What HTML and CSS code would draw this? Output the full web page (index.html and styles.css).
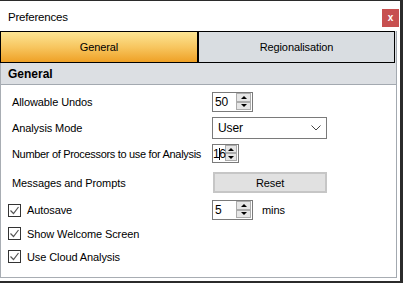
FILE: index.html
```html
<!DOCTYPE html>
<html>
<head>
<meta charset="utf-8">
<link rel="stylesheet" href="styles.css">
</head>
<body>
<div class="window">
  <div class="titlebar">
    <span class="title">Preferences</span>
    <span class="close">x</span>
  </div>
  <div class="tabbox">
    <div class="tabs">
      <div class="tab active">General</div>
      <div class="tab">Regionalisation</div>
    </div>
    <div class="panel">
      <div class="header">General</div>
      <div class="rows">
        <div class="label">Allowable Undos</div>
        <div class="ctl">
          <div class="spin w41"><span class="val">50</span><span class="btns"><span class="b up"></span><span class="b down"></span></span></div>
        </div>

        <div class="label">Analysis Mode</div>
        <div class="ctl">
          <div class="select"><span>User</span><svg width="10" height="6" viewBox="0 0 10 6"><polyline points="0.5,0.5 5,5 9.5,0.5" fill="none" stroke="#444" stroke-width="1"/></svg></div>
        </div>

        <div class="label tight">Number of Processors to use for Analysis</div>
        <div class="ctl">
          <div class="spin w27"><span class="val narrow">16<i class="caret"></i></span><span class="btns"><span class="b up"></span><span class="b down"></span></span></div>
        </div>

        <div class="label">Messages and Prompts</div>
        <div class="ctl">
          <div class="button">Reset</div>
        </div>

        <div class="check"><span class="box"><svg width="11" height="11" viewBox="0 0 11 11"><polyline points="1.5,5.5 4.5,8.5 9.5,2" fill="none" stroke="#555" stroke-width="1.2"/></svg></span>Autosave</div>
        <div class="ctl">
          <div class="spin w41"><span class="val">5</span><span class="btns"><span class="b up"></span><span class="b down"></span></span></div>
          <span class="unit">mins</span>
        </div>

        <div class="check full"><span class="box"><svg width="11" height="11" viewBox="0 0 11 11"><polyline points="1.5,5.5 4.5,8.5 9.5,2" fill="none" stroke="#555" stroke-width="1.2"/></svg></span>Show Welcome Screen</div>

        <div class="check full"><span class="box"><svg width="11" height="11" viewBox="0 0 11 11"><polyline points="1.5,5.5 4.5,8.5 9.5,2" fill="none" stroke="#555" stroke-width="1.2"/></svg></span>Use Cloud Analysis</div>
      </div>
    </div>
  </div>
</div>
</body>
</html>
```

FILE: styles.css
```css
html, body {
  margin: 0;
  padding: 0;
  background: #ffffff;
}
body {
  font-family: "Liberation Sans", Arial, sans-serif;
  font-size: 11px;
  letter-spacing: -0.1px;
  color: #000;
}
.window {
  width: 400px;
  height: 280px;
  border-top: 1px solid #2b2b2b;
  border-right: 3px solid #2b2b2b;
  border-bottom: 2px solid #2b2b2b;
  background: #fff;
  display: flex;
  flex-direction: column;
}
.titlebar {
  height: 30px;
  display: flex;
  align-items: center;
  justify-content: space-between;
  padding-left: 8px;
  padding-right: 1px;
}
.title {
  font-size: 11.5px;
  letter-spacing: -0.2px;
  margin-top: 2px;
}
.close {
  width: 17px;
  height: 18px;
  margin-top: 4px;
  background: #c75050;
  color: #fff;
  font-weight: bold;
  font-size: 10px;
  display: flex;
  align-items: center;
  justify-content: center;
  line-height: 1;
}
.tabbox {
  width: 396px;
  border-right: 1px solid #a3a9b0;
  background: #dcdfe3;
  display: flex;
  flex-direction: column;
}
.tabs {
  display: flex;
  height: 32px;
}
.tab {
  box-sizing: border-box;
  height: 32px;
  border: 1px solid #000;
  display: flex;
  align-items: center;
  justify-content: center;
  font-size: 11px;
  background: #d9dde1;
}
.tab:first-child {
  width: 198px;
}
.tab:last-child {
  width: 197px;
}
.tab.active {
  background: linear-gradient(to bottom, #fde594 0%, #f7c660 50%, #efa126 100%);
}
.panel {
  height: 214px;
  border-left: 1px solid #a8adb3;
  border-bottom: 1px solid #a8adb3;
  background: #fff;
}
.header {
  height: 21px;
  background: #dcdfe3;
  border-bottom: 1px solid #a3a9b0;
  font-weight: bold;
  font-size: 12px;
  letter-spacing: 0;
  display: flex;
  align-items: center;
  padding-left: 7px;
}
.rows {
  display: grid;
  grid-template-columns: 204px auto;
  grid-template-rows: 26px 26px 25px 33px 22px 25px 21px;
  padding-top: 4px;
  padding-left: 7px;
}
.label {
  display: flex;
  align-items: center;
  padding-left: 4px;
  white-space: nowrap;
}
.label.tight {
  letter-spacing: -0.32px;
}
.ctl {
  display: flex;
  align-items: center;
}
.check {
  display: flex;
  align-items: center;
  white-space: nowrap;
}
.check.full {
  grid-column: 1 / span 2;
}
.box {
  box-sizing: border-box;
  width: 13px;
  height: 13px;
  border: 1px solid #333;
  background: #fff;
  margin-right: 6px;
  display: flex;
  align-items: center;
  justify-content: center;
}
.spin {
  box-sizing: border-box;
  height: 20px;
  border: 1px solid #7a7a7a;
  background: #fff;
  display: flex;
  align-items: stretch;
}
.spin.w41 {
  width: 41px;
}
.spin.w27 {
  width: 27px;
  height: 19px;
}
.val {
  flex: 1;
  display: flex;
  align-items: center;
  padding-left: 2px;
  font-size: 12px;
  position: relative;
}
.val.narrow {
  padding-left: 0;
  letter-spacing: -0.5px;
}
.caret {
  position: absolute;
  left: 6px;
  top: 3px;
  width: 1px;
  height: 12px;
  background: #000;
}
.btns {
  width: 15px;
  display: flex;
  flex-direction: column;
  margin: 0 1px 1px 0;
}
.b {
  box-sizing: border-box;
  flex: 1;
  border: 1px solid #acacac;
  background: #e6e6e6;
  display: flex;
  align-items: center;
  justify-content: center;
}
.b.up::after {
  content: "";
  border-left: 3px solid transparent;
  border-right: 3px solid transparent;
  border-bottom: 3px solid #000;
}
.b.down::after {
  content: "";
  border-left: 3px solid transparent;
  border-right: 3px solid transparent;
  border-top: 3px solid #000;
}
.select {
  box-sizing: border-box;
  width: 115px;
  height: 22px;
  border: 1px solid #7a7a7a;
  background: #fff;
  display: flex;
  align-items: center;
  justify-content: space-between;
  padding: 0 5px 0 5px;
  font-size: 12px;
}
.button {
  box-sizing: border-box;
  width: 114px;
  height: 21px;
  margin-left: 1px;
  border: 2px solid #c6c6c6;
  background: #e1e1e1;
  display: flex;
  align-items: center;
  justify-content: center;
  font-size: 11px;
}
.unit {
  margin-left: 9px;
}
```
